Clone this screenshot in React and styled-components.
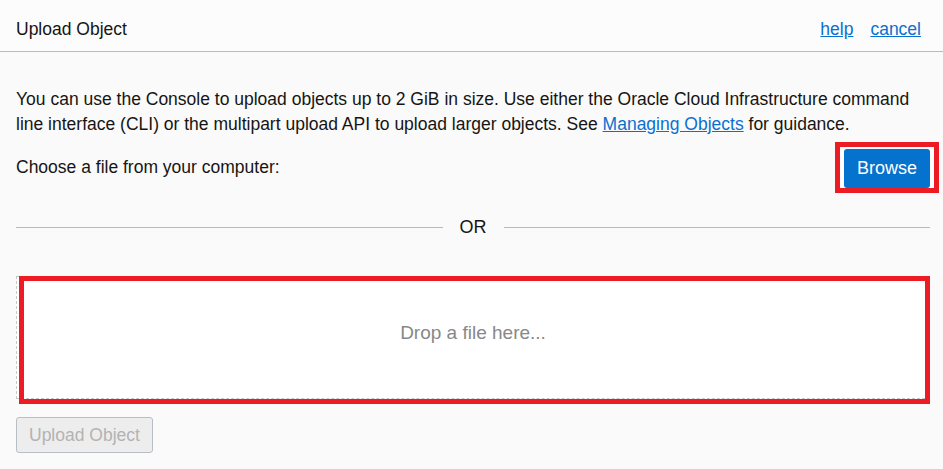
import React from 'react';
import styled, { createGlobalStyle } from 'styled-components';

const GlobalStyle = createGlobalStyle`
  html, body {
    margin: 0;
    padding: 0;
    background: #fafafa;
  }
  body {
    font-family: "Liberation Sans", Arial, sans-serif;
    color: #161513;
  }
`;

const Page = styled.div`
  width: 943px;
  height: 469px;
  overflow: hidden;
  background: #fafafa;
`;

const Header = styled.div`
  display: flex;
  align-items: center;
  justify-content: space-between;
  height: 52px;
  padding: 8px 22px 0 16px;
  box-sizing: border-box;
  background: #fcfcfc;
  border-bottom: 1px solid #b5bbc2;
`;

const Title = styled.div`
  font-size: 17.5px;
  color: #161513;
`;

const HeaderLinks = styled.div`
  display: flex;
  gap: 17px;
`;

const Link = styled.a`
  font-size: 17.5px;
  color: #0a70d0;
  text-decoration: underline;
  cursor: pointer;
`;

const Body = styled.div`
  padding: 35px 13px 0 16px;
`;

const Intro = styled.p`
  margin: 0;
  font-size: 17.5px;
  line-height: 25px;
`;

const ChooseRow = styled.div`
  display: flex;
  align-items: center;
  justify-content: space-between;
  margin-top: 5px;
  font-size: 17.5px;
`;

const Highlight = styled.div`
  display: flex;
  margin-right: -9px;
  padding: 2px 4px 0 4px;
  border: 5px solid #ed1c24;
  background: #fff;
`;

const BrowseButton = styled.button`
  height: 39px;
  width: 86px;
  border: none;
  border-radius: 3px;
  background: #0572ce;
  color: #fff;
  font-family: "Liberation Sans", Arial, sans-serif;
  font-size: 18px;
  cursor: pointer;
`;

const Divider = styled.div`
  display: flex;
  align-items: center;
  gap: 17px;
  height: 20px;
  margin-top: 24px;
  font-size: 18px;
  color: #161513;

  &::before,
  &::after {
    content: '';
    flex: 1;
    height: 1px;
    background: #b5bbc2;
  }
`;

const DropZone = styled.div`
  position: relative;
  display: flex;
  align-items: center;
  justify-content: center;
  height: 123px;
  margin-top: 39px;
  padding-bottom: 10px;
  box-sizing: border-box;
  border: 1px dashed #c8c8c8;
  background: #fff;
  font-size: 19px;
  color: #888;
`;

const DropMark = styled.div`
  position: absolute;
  top: -1px;
  left: 2px;
  right: -1px;
  bottom: -6px;
  border: 5px solid #ed1c24;
  pointer-events: none;
`;

const UploadButton = styled.button`
  margin-top: 18px;
  height: 36px;
  padding: 0 12px;
  border: 1px solid #b9bec4;
  border-radius: 3px;
  background: #ededed;
  color: #b3b3b3;
  font-family: "Liberation Sans", Arial, sans-serif;
  font-size: 17.5px;
`;

const App = () => (
  <Page>
    <GlobalStyle />
    <Header>
      <Title>Upload Object</Title>
      <HeaderLinks>
        <Link>help</Link>
        <Link>cancel</Link>
      </HeaderLinks>
    </Header>
    <Body>
      <Intro>
        You can use the Console to upload objects up to 2 GiB in size. Use
        either the Oracle Cloud Infrastructure command line interface (CLI) or
        the multipart upload API to upload larger objects. See{' '}
        <Link>Managing Objects</Link> for guidance.
      </Intro>
      <ChooseRow>
        <span>Choose a file from your computer:</span>
        <Highlight>
          <BrowseButton>Browse</BrowseButton>
        </Highlight>
      </ChooseRow>
      <Divider>OR</Divider>
      <DropZone>
        Drop a file here...
        <DropMark />
      </DropZone>
      <UploadButton disabled>Upload Object</UploadButton>
    </Body>
  </Page>
);

export default App;
